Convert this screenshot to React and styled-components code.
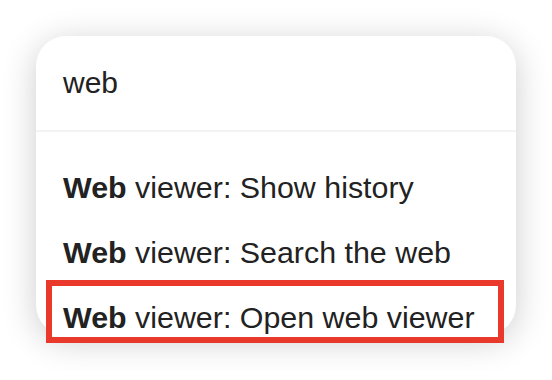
import React from "react";
import styled, { createGlobalStyle } from "styled-components";

const GlobalStyle = createGlobalStyle`
  html, body {
    margin: 0;
    padding: 0;
    background: #ffffff;
  }
  body {
    font-family: "Liberation Sans", Arial, sans-serif;
    color: #222222;
  }
`;

const Page = styled.div`
  padding: 36px;
`;

const Palette = styled.div`
  width: 480px;
  height: 299px;
  box-sizing: border-box;
  background: #ffffff;
  border-radius: 30px;
  box-shadow: 0 6px 34px rgba(0, 0, 0, 0.2);
  display: flex;
  flex-direction: column;
`;

const SearchBar = styled.div`
  height: 94px;
  line-height: 94px;
  padding: 0 27px;
  font-size: 30px;
  color: #222222;
  border-bottom: 2px solid #f3f3f3;
`;

const ResultList = styled.div`
  display: flex;
  flex-direction: column;
  padding-top: 22.5px;
`;

const Result = styled.div`
  height: 65.5px;
  line-height: 65.5px;
  padding-left: 27px;
  font-size: 30.4px;
  color: #222222;
  white-space: nowrap;

  ${(p) =>
    p.$selected &&
    `
    box-sizing: border-box;
    height: 63px;
    line-height: 51px;
    margin: -6px 12px 0 10px;
    padding: 6.5px 0 0 11px;
    border: 6px solid #e8392b;
    background: #ffffff;
  `}
`;

const Match = styled.b`
  font-weight: 700;
`;

const results = [
  "viewer: Show history",
  "viewer: Search the web",
  "viewer: Open web viewer",
];

export default function App() {
  return (
    <>
      <GlobalStyle />
      <Page>
        <Palette>
          <SearchBar>web</SearchBar>
          <ResultList>
            {results.map((label, i) => (
              <Result key={label} $selected={i === results.length - 1}>
                <Match>Web</Match> {label}
              </Result>
            ))}
          </ResultList>
        </Palette>
      </Page>
    </>
  );
}
